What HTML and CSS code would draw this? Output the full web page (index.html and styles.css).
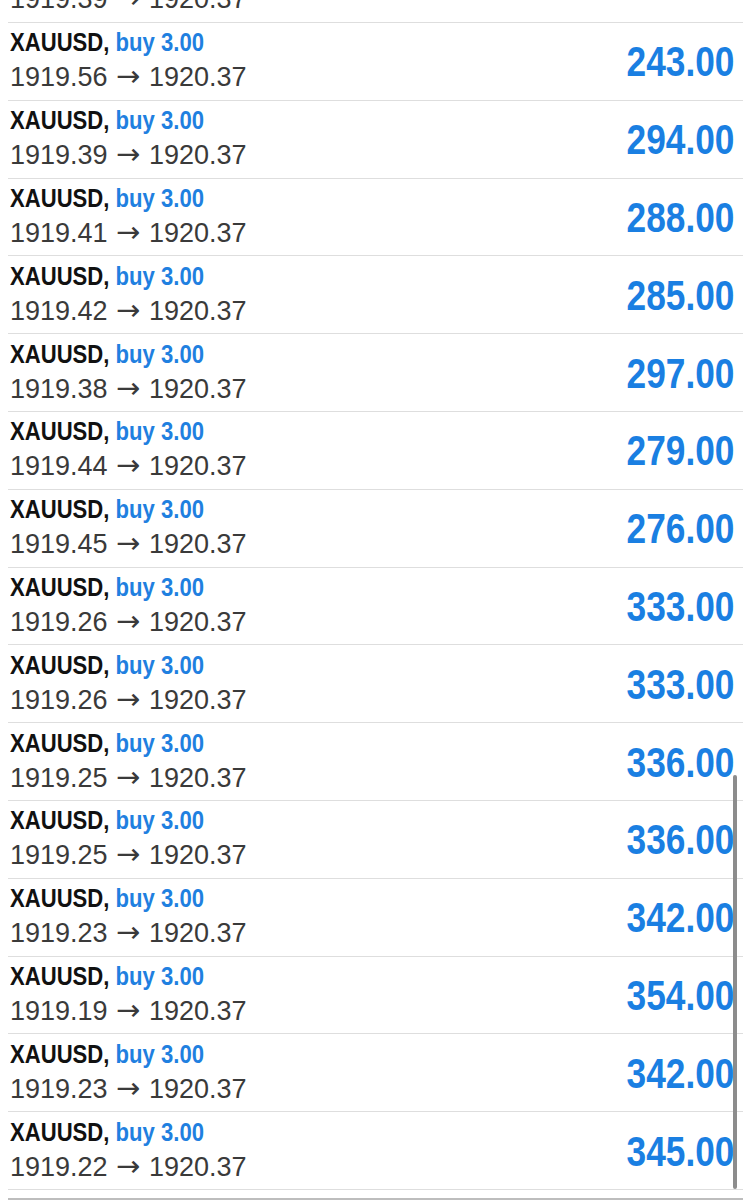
FILE: index.html
```html
<!DOCTYPE html>
<html lang="en">
<head>
    <meta charset="UTF-8">
    <meta name="viewport" content="width=device-width, initial-scale=1.0">
    <title>Positions</title>
    <link rel="stylesheet" href="styles.css">
</head>
<body>
<main class="positions">
    <div class="trade">
        <div class="info">
            <div class="title"><span class="cond">XAUUSD, <span class="side">buy 3.00</span></span></div>
            <div class="prices">1919.39 <span class="arrow">&rarr;</span> 1920.37</div>
        </div>
        <div class="profit"><span class="cond">294.00</span></div>
    </div>
    <div class="trade">
        <div class="info">
            <div class="title"><span class="cond">XAUUSD, <span class="side">buy 3.00</span></span></div>
            <div class="prices">1919.56 <span class="arrow">&rarr;</span> 1920.37</div>
        </div>
        <div class="profit"><span class="cond">243.00</span></div>
    </div>
    <div class="trade">
        <div class="info">
            <div class="title"><span class="cond">XAUUSD, <span class="side">buy 3.00</span></span></div>
            <div class="prices">1919.39 <span class="arrow">&rarr;</span> 1920.37</div>
        </div>
        <div class="profit"><span class="cond">294.00</span></div>
    </div>
    <div class="trade">
        <div class="info">
            <div class="title"><span class="cond">XAUUSD, <span class="side">buy 3.00</span></span></div>
            <div class="prices">1919.41 <span class="arrow">&rarr;</span> 1920.37</div>
        </div>
        <div class="profit"><span class="cond">288.00</span></div>
    </div>
    <div class="trade">
        <div class="info">
            <div class="title"><span class="cond">XAUUSD, <span class="side">buy 3.00</span></span></div>
            <div class="prices">1919.42 <span class="arrow">&rarr;</span> 1920.37</div>
        </div>
        <div class="profit"><span class="cond">285.00</span></div>
    </div>
    <div class="trade">
        <div class="info">
            <div class="title"><span class="cond">XAUUSD, <span class="side">buy 3.00</span></span></div>
            <div class="prices">1919.38 <span class="arrow">&rarr;</span> 1920.37</div>
        </div>
        <div class="profit"><span class="cond">297.00</span></div>
    </div>
    <div class="trade">
        <div class="info">
            <div class="title"><span class="cond">XAUUSD, <span class="side">buy 3.00</span></span></div>
            <div class="prices">1919.44 <span class="arrow">&rarr;</span> 1920.37</div>
        </div>
        <div class="profit"><span class="cond">279.00</span></div>
    </div>
    <div class="trade">
        <div class="info">
            <div class="title"><span class="cond">XAUUSD, <span class="side">buy 3.00</span></span></div>
            <div class="prices">1919.45 <span class="arrow">&rarr;</span> 1920.37</div>
        </div>
        <div class="profit"><span class="cond">276.00</span></div>
    </div>
    <div class="trade">
        <div class="info">
            <div class="title"><span class="cond">XAUUSD, <span class="side">buy 3.00</span></span></div>
            <div class="prices">1919.26 <span class="arrow">&rarr;</span> 1920.37</div>
        </div>
        <div class="profit"><span class="cond">333.00</span></div>
    </div>
    <div class="trade">
        <div class="info">
            <div class="title"><span class="cond">XAUUSD, <span class="side">buy 3.00</span></span></div>
            <div class="prices">1919.26 <span class="arrow">&rarr;</span> 1920.37</div>
        </div>
        <div class="profit"><span class="cond">333.00</span></div>
    </div>
    <div class="trade">
        <div class="info">
            <div class="title"><span class="cond">XAUUSD, <span class="side">buy 3.00</span></span></div>
            <div class="prices">1919.25 <span class="arrow">&rarr;</span> 1920.37</div>
        </div>
        <div class="profit"><span class="cond">336.00</span></div>
    </div>
    <div class="trade">
        <div class="info">
            <div class="title"><span class="cond">XAUUSD, <span class="side">buy 3.00</span></span></div>
            <div class="prices">1919.25 <span class="arrow">&rarr;</span> 1920.37</div>
        </div>
        <div class="profit"><span class="cond">336.00</span></div>
    </div>
    <div class="trade">
        <div class="info">
            <div class="title"><span class="cond">XAUUSD, <span class="side">buy 3.00</span></span></div>
            <div class="prices">1919.23 <span class="arrow">&rarr;</span> 1920.37</div>
        </div>
        <div class="profit"><span class="cond">342.00</span></div>
    </div>
    <div class="trade">
        <div class="info">
            <div class="title"><span class="cond">XAUUSD, <span class="side">buy 3.00</span></span></div>
            <div class="prices">1919.19 <span class="arrow">&rarr;</span> 1920.37</div>
        </div>
        <div class="profit"><span class="cond">354.00</span></div>
    </div>
    <div class="trade">
        <div class="info">
            <div class="title"><span class="cond">XAUUSD, <span class="side">buy 3.00</span></span></div>
            <div class="prices">1919.23 <span class="arrow">&rarr;</span> 1920.37</div>
        </div>
        <div class="profit"><span class="cond">342.00</span></div>
    </div>
    <div class="trade">
        <div class="info">
            <div class="title"><span class="cond">XAUUSD, <span class="side">buy 3.00</span></span></div>
            <div class="prices">1919.22 <span class="arrow">&rarr;</span> 1920.37</div>
        </div>
        <div class="profit"><span class="cond">345.00</span></div>
    </div>
    <div class="list-end"></div>
    <div class="scrollbar"></div>
</main>
</body>
</html>
```

FILE: styles.css
```css
html, body {
    margin: 0;
    padding: 0;
    background: #fff;
    overflow: hidden;
}
body {
    font-family: "Liberation Sans", Arial, sans-serif;
    height: 1200px;
}
.positions {
    position: relative;
    margin-top: -55.8px;
}
.trade {
    display: flex;
    align-items: center;
    justify-content: space-between;
    height: 77.8px;
    box-sizing: border-box;
    margin-left: 8px;
    padding: 0 9px 0 2px;
    border-top: 1px solid #dedede;
}
.trade:first-child {
    border-top: none;
}
.info {
    display: flex;
    flex-direction: column;
}
.title {
    font-size: 26px;
    font-weight: bold;
    line-height: 30px;
    color: #111;
    white-space: nowrap;
}
.cond {
    display: inline-block;
    transform: scaleX(0.85);
    transform-origin: left center;
}
.side {
    color: #1f80e0;
}
.prices {
    font-size: 27px;
    line-height: 36px;
    margin-top: 2px;
    color: #3a3a3a;
    white-space: nowrap;
}
.arrow {
    font-family: "DejaVu Sans", sans-serif;
    font-size: 29px;
    line-height: 1;
    margin: 0 1px;
}
.profit {
    font-size: 42px;
    font-weight: bold;
    color: #1a7fe2;
    white-space: nowrap;
    padding-top: 2px;
}
.profit .cond {
    transform: scaleX(0.84);
    transform-origin: right center;
}
.list-end {
    margin-left: 8px;
    border-top: 1px solid #dedede;
    height: 8px;
    border-bottom: 2px solid #bdbdbd;
}
.scrollbar {
    position: absolute;
    right: 6px;
    top: 831px;
    width: 4px;
    height: 414px;
    background: #8c8c8c;
    border-radius: 2px;
}
```
